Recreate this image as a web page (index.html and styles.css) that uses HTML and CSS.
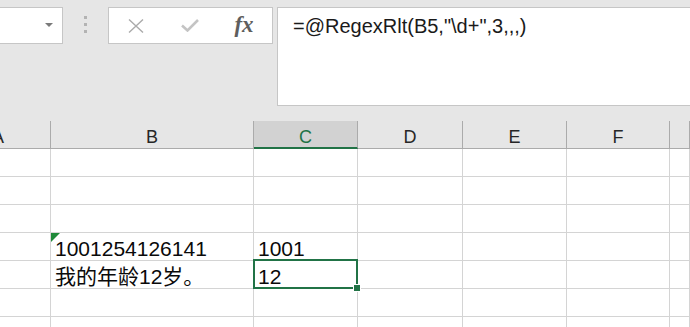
FILE: index.html
```html
<!DOCTYPE html>
<html>
  <head>
    <title>RegexRlt</title>
    <link rel="stylesheet" href="styles.css">
  </head>
<body>
  <div class="toolbar">
    <div class="namebox"><span class="caret"></span></div>
    <div class="grip"><i></i><i></i><i></i></div>
    <div class="fxbtns">
      <span class="btn">
        <svg width="16" height="14" viewBox="0 0 16 14"><path d="M1 0.5L15 13.5M15 0.5L1 13.5" stroke="#ababab" stroke-width="1.4" fill="none"/></svg>
      </span>
      <span class="btn">
        <svg width="18" height="13" viewBox="0 0 18 13"><path d="M1 6.5L6.5 11.5L17 1" stroke="#c4c4c4" stroke-width="2.6" fill="none"/></svg>
      </span>
      <span class="btn fx">fx</span>
    </div>
    <div class="formula">=@RegexRlt(B5,"\d+",3,,,)</div>
  </div>

  <div class="sheet">
    <div class="hd">A</div>
    <div class="hd">B</div>
    <div class="hd active">C</div>
    <div class="hd">D</div>
    <div class="hd">E</div>
    <div class="hd">F</div>
    <div class="hd"></div>

    <div class="cell"></div><div class="cell"></div><div class="cell"></div><div class="cell"></div><div class="cell"></div><div class="cell"></div><div class="cell"></div>
    <div class="cell"></div><div class="cell"></div><div class="cell"></div><div class="cell"></div><div class="cell"></div><div class="cell"></div><div class="cell"></div>
    <div class="cell"></div><div class="cell"></div><div class="cell"></div><div class="cell"></div><div class="cell"></div><div class="cell"></div><div class="cell"></div>

    <div class="cell"></div>
    <div class="cell flag">1001254126141</div>
    <div class="cell">1001</div>
    <div class="cell"></div><div class="cell"></div><div class="cell"></div><div class="cell"></div>

    <div class="cell"></div>
    <div class="cell">我的年龄12岁。</div>
    <div class="cell selected">12<span class="handle"></span></div>
    <div class="cell"></div><div class="cell"></div><div class="cell"></div><div class="cell"></div>

    <div class="cell"></div><div class="cell"></div><div class="cell"></div><div class="cell"></div><div class="cell"></div><div class="cell"></div><div class="cell"></div>
    <div class="cell"></div><div class="cell"></div><div class="cell"></div><div class="cell"></div><div class="cell"></div><div class="cell"></div><div class="cell"></div>
  </div>
</body>
</html>
```

FILE: styles.css
```css
body {
  margin: 0;
  background: #e6e6e6;
  font-family: "Liberation Sans", "Noto Sans CJK SC", sans-serif;
  overflow: hidden;
  height: 327px;
}

.toolbar {
  display: flex;
  align-items: flex-start;
  padding-top: 7px;
  height: 114px;
}

.namebox {
  box-sizing: border-box;
  margin-left: -1px;
  width: 64px;
  height: 37px;
  background: white;
  border: 1px solid #c6c6c6;
  position: relative;
}

.caret {
  position: absolute;
  left: 45px;
  top: 15px;
  border-left: 4px solid transparent;
  border-right: 4px solid transparent;
  border-top: 4px solid #7a7a7a;
}

.grip {
  width: 45px;
  display: flex;
  flex-direction: column;
  align-items: center;
  gap: 4px;
  padding-top: 9px;
}

.grip i {
  display: block;
  width: 3px;
  height: 3px;
  background: #b3b3b3;
}

.fxbtns {
  box-sizing: border-box;
  width: 165px;
  height: 37px;
  background: white;
  border: 1px solid #c6c6c6;
  display: flex;
}

.btn {
  width: 54px;
  height: 35px;
  display: flex;
  align-items: center;
  justify-content: center;
}

.fx {
  font-family: "Liberation Serif", serif;
  font-style: italic;
  font-weight: bold;
  font-size: 23px;
  color: #5e5e5e;
  padding-bottom: 2px;
  box-sizing: border-box;
}

.formula {
  box-sizing: border-box;
  flex: 1;
  margin-left: 4px;
  margin-right: -1px;
  height: 99px;
  background: white;
  border: 1px solid #c6c6c6;
  padding: 6px 0 0 15px;
  font-size: 20px;
  line-height: 24px;
  color: #1a1a1a;
}

.sheet {
  display: grid;
  grid-template-columns: 105px 203px 104px 105px 104px 103px 1fr;
  grid-auto-rows: 28px;
  margin-left: -54px;
  width: calc(100% + 54px);
  height: 206px;
  overflow: hidden;
}

.hd {
  box-sizing: border-box;
  border-right: 1px solid #ababab;
  border-bottom: 1px solid #ababab;
  text-align: center;
  font-size: 18px;
  line-height: 24px;
  padding-top: 4px;
  color: #262626;
}

.hd.active {
  background: #d2d2d2;
  color: #217346;
  border-bottom: 2px solid #217346;
}

.cell {
  box-sizing: border-box;
  background: white;
  border-right: 1px solid #d4d4d4;
  border-bottom: 1px solid #d4d4d4;
  font-size: 21px;
  line-height: 24px;
  padding: 4px 0 0 4px;
  color: #0a0a0a;
  white-space: nowrap;
  position: relative;
}

.cell.flag::before {
  content: "";
  position: absolute;
  left: 0;
  top: 0;
  border-top: 9px solid #1f8a3a;
  border-right: 9px solid transparent;
}

.cell.selected::after {
  content: "";
  position: absolute;
  top: -2px;
  left: -1px;
  right: -1px;
  bottom: -1px;
  border: 2px solid #217346;
}

.handle {
  position: absolute;
  right: -4px;
  bottom: -4px;
  width: 6px;
  height: 6px;
  background: #217346;
  border: 1px solid white;
  z-index: 1;
}
```
